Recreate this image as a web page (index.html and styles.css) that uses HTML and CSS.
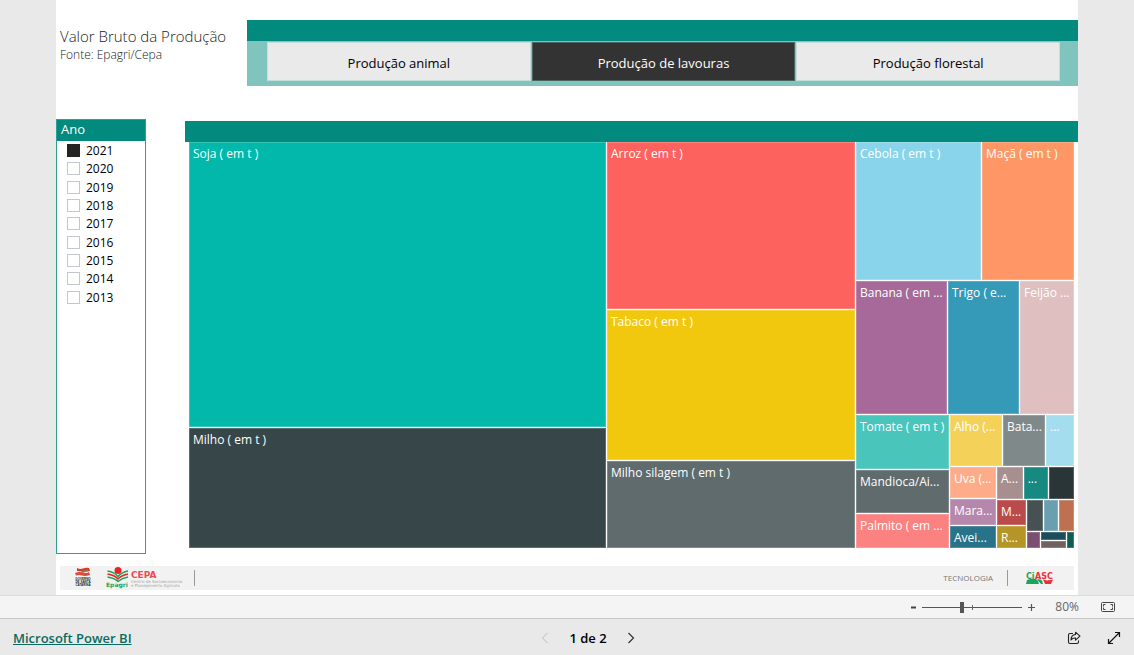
FILE: index.html
```html
<!DOCTYPE html>
<html lang="pt-BR">
<head>
<meta charset="utf-8">
<meta name="viewport" content="width=device-width, initial-scale=1">
<title>Valor Bruto da Produção</title>
<link rel="stylesheet" href="styles.css">
</head>
<body>
<main class="report">
  <header class="report-header">
    <div class="titles">
      <h1 class="title">Valor Bruto da Produção</h1>
      <p class="source">Fonte: Epagri/Cepa</p>
    </div>
    <div class="tabs-panel">
      <div class="band"></div>
      <nav class="tabs" aria-label="Produção">
        <button class="tab" type="button">Produção animal</button>
        <button class="tab tab-active" type="button">Produção de lavouras</button>
        <button class="tab" type="button">Produção florestal</button>
      </nav>
    </div>
  </header>

  <div class="visuals">
    <section class="slicer">
      <h2 class="slicer-title">Ano</h2>
      <div class="years">
        <label class="year"><input class="check" type="checkbox" checked>2021</label>
        <label class="year"><input class="check" type="checkbox">2020</label>
        <label class="year"><input class="check" type="checkbox">2019</label>
        <label class="year"><input class="check" type="checkbox">2018</label>
        <label class="year"><input class="check" type="checkbox">2017</label>
        <label class="year"><input class="check" type="checkbox">2016</label>
        <label class="year"><input class="check" type="checkbox">2015</label>
        <label class="year"><input class="check" type="checkbox">2014</label>
        <label class="year"><input class="check" type="checkbox">2013</label>
      </div>
    </section>

    <section class="chart">
      <div class="band"></div>
      <div class="treemap">
        <div class="col" style="flex-grow:417">
          <div class="tile soja" style="flex-grow:285">Soja ( em t )</div>
          <div class="tile milho" style="flex-grow:120">Milho ( em t )</div>
        </div>
        <div class="col" style="flex-grow:248">
          <div class="tile arroz" style="flex-grow:167">Arroz ( em t )</div>
          <div class="tile tabaco" style="flex-grow:150">Tabaco ( em t )</div>
          <div class="tile silagem" style="flex-grow:87">Milho silagem ( em t )</div>
        </div>
        <div class="col" style="flex-grow:218">
          <div class="row" style="flex-grow:138">
            <div class="tile cebola" style="flex-grow:125">Cebola ( em t )</div>
            <div class="tile maca" style="flex-grow:92">Maçã ( em t )</div>
          </div>
          <div class="row" style="flex-grow:133">
            <div class="tile banana" style="flex-grow:91">Banana ( em ...</div>
            <div class="tile trigo" style="flex-grow:71">Trigo ( e...</div>
            <div class="tile feijao" style="flex-grow:54">Feijão ...</div>
          </div>
          <div class="row" style="flex-grow:133">
            <div class="col" style="flex-grow:93">
              <div class="tile tomate" style="flex-grow:54">Tomate ( em t )</div>
              <div class="tile mandioca" style="flex-grow:43">Mandioca/Ai...</div>
              <div class="tile palmito" style="flex-grow:34">Palmito ( em ...</div>
            </div>
            <div class="col" style="flex-grow:124">
              <div class="row" style="flex-grow:51">
                <div class="tile alho" style="flex-grow:52">Alho (...</div>
                <div class="tile batata" style="flex-grow:42">Bata...</div>
                <div class="tile sky" style="flex-grow:28">...</div>
              </div>
              <div class="row" style="flex-grow:81">
                <div class="col" style="flex-grow:46">
                  <div class="tile uva" style="flex-grow:31">Uva (...</div>
                  <div class="tile maracuja" style="flex-grow:26">Mara...</div>
                  <div class="tile aveia" style="flex-grow:22">Avei...</div>
                </div>
                <div class="col" style="flex-grow:77">
                  <div class="row" style="flex-grow:32">
                    <div class="tile mauve" style="flex-grow:26">A...</div>
                    <div class="tile jade" style="flex-grow:25">...</div>
                    <div class="tile ink" style="flex-grow:25"></div>
                  </div>
                  <div class="row" style="flex-grow:48">
                    <div class="col" style="flex-grow:29">
                      <div class="tile brick" style="flex-grow:25">M...</div>
                      <div class="tile mustard" style="flex-grow:22">R...</div>
                    </div>
                    <div class="col" style="flex-grow:47">
                      <div class="row" style="flex-grow:31">
                        <div class="tile slate" style="flex-grow:16"></div>
                        <div class="tile steel" style="flex-grow:15"></div>
                        <div class="tile copper" style="flex-grow:15"></div>
                      </div>
                      <div class="row" style="flex-grow:16">
                        <div class="tile plum" style="flex-grow:13"></div>
                        <div class="col" style="flex-grow:25">
                          <div class="tile navy" style="flex-grow:7"></div>
                          <div class="tile taupe" style="flex-grow:7"></div>
                        </div>
                        <div class="tile forest" style="flex-grow:7"></div>
                      </div>
                    </div>
                  </div>
                </div>
              </div>
            </div>
          </div>
        </div>
      </div>
    </section>
  </div>

  <footer class="credits">
    <svg class="logo-gov" width="18" height="22" viewBox="0 0 18 22" role="img" aria-label="Governo de Santa Catarina">
      <path d="M3 1q3 1.500 6 .5t6-.5l1 3q-4 1-7 .5T3 4z" fill="#e0322f"/>
      <path d="M7 3.500q4 0 6-1.500l1.500 1.500L8 6z" fill="#7d8a35"/>
      <path d="M1 6q4-1.500 8-.5t6-.5l1 3q-5 1.500-8 .5T2 8.500z" fill="#e04a3c"/>
      <g font-family="Liberation Sans, sans-serif" font-weight="700" font-size="3" fill="#222" text-anchor="middle">
        <text x="9" y="12.500">GOVERNO</text><text x="9" y="15.500">DE SANTA</text><text x="9" y="18.500">CATARINA</text>
      </g>
    </svg>
    <svg class="logo-cepa" width="80" height="24" viewBox="0 0 80 24" role="img" aria-label="Epagri Cepa">
      <circle cx="12" cy="4.500" r="3.500" fill="#ed2027"/>
      <g fill="none" stroke-width="1.500">
        <path d="M1.500 5q7 1 10.500 5.500q4-4.500 10-5.500" stroke="#1ba45a"/>
        <path d="M1.500 8q7 1 10.500 5q4-4 10-5" stroke="#ed2027"/>
        <path d="M1.500 11q7 1 10.500 4.500q4-3.500 10-4.500" stroke="#1ba45a"/>
      </g>
      <text x="0" y="21" font-family="DejaVu Sans, sans-serif" font-weight="700" font-size="6" fill="#1ba45a">Epagri</text>
      <text x="25" y="11.500" font-family="DejaVu Sans, sans-serif" font-weight="700" font-size="9" fill="#f04850">CEPA</text>
      <g font-family="DejaVu Sans, sans-serif" font-size="4" fill="#a5a5a5">
        <text x="25" y="17">Centro de Socioeconomia</text><text x="25" y="20.500">e Planejamento Agrícola</text>
      </g>
    </svg>
    <span class="divider"></span>
    <span class="tech">TECNOLOGIA</span>
    <span class="divider"></span>
    <svg class="logo-ciasc" width="28" height="14" viewBox="0 0 28 14" role="img" aria-label="CIASC">
      <path d="M0 13l1-4q5-2 9-1l2 2 1 3z" fill="#1ba45a"/>
      <path d="M11 8.500q3-1 5 1l1 3.500h-2z" fill="#1ba45a"/>
      <path d="M17 8.500l4 1 6-1-2 4.500h-6z" fill="#ed2f36"/>
      <g font-family="DejaVu Sans, sans-serif" font-weight="700" font-size="8">
        <text x="0" y="7.500" fill="#1ba45a">Ci</text><text x="9" y="7.500" fill="#ed2f36">ASC</text>
      </g>
    </svg>
  </footer>
</main>

<div class="zoombar">
  <button class="zoom-btn" type="button" aria-label="Reduzir"><svg width="7" height="9" viewBox="0 0 7 9"><path d="M1 4.500h5" stroke="#444" stroke-width="2"/></svg></button>
  <input class="zoom-range" type="range" min="0" max="100" value="39" aria-label="Zoom">
  <button class="zoom-btn" type="button" aria-label="Ampliar"><svg width="9" height="9" viewBox="0 0 9 9"><path d="M1 4.500h7M4.500 1v7" stroke="#555" stroke-width="1.200"/></svg></button>
  <span class="percent">80%</span>
  <button class="zoom-btn fit" type="button" aria-label="Ajustar à página"><svg width="14" height="10" viewBox="0 0 14 10" fill="none" stroke="#444"><rect x=".5" y=".5" width="13" height="9" rx="1"/><path d="M4.500 2.500h-2v2M2.500 5.500v2h2M9.500 2.500h2v2M11.500 5.500v2h-2"/></svg></button>
</div>

<div class="navbar">
  <a class="brand" href="#">Microsoft Power BI</a>
  <div class="pager">
    <button class="icon-btn" type="button" disabled aria-label="Página anterior"><svg width="8" height="12" viewBox="0 0 8 12" fill="none" stroke="#bdbdbd"><path d="M6.500 1l-5 5 5 5"/></svg></button>
    <span class="page">1 de 2</span>
    <button class="icon-btn" type="button" aria-label="Próxima página"><svg width="8" height="12" viewBox="0 0 8 12" fill="none" stroke="#333" stroke-width="1.200"><path d="M1.500 1l5 5-5 5"/></svg></button>
  </div>
  <div class="actions">
    <button class="icon-btn" type="button" aria-label="Compartilhar"><svg width="14" height="14" viewBox="0 0 14 14" fill="none" stroke="#222" stroke-width="1.100" stroke-linejoin="round"><path d="M6 2.500H3q-1.500 0-1.500 1.500v7q0 1.500 1.500 1.500h7q1.500 0 1.500-1.500v-1.500"/><path d="M8.500 1.200l4.500 4-4.500 4V7Q5.500 6.700 4 9q0-5 4.500-5.500z"/></svg></button>
    <button class="icon-btn" type="button" aria-label="Tela inteira"><svg width="14" height="14" viewBox="0 0 14 14" fill="none" stroke="#111" stroke-width="1.200"><path d="M1.500 12.500l11-11M8 1.500h4.500V6M1.500 8v4.500H6"/></svg></button>
  </div>
</div>
</body>
</html>
```
FILE: styles.css
```css
* { box-sizing: border-box; }

body {
  margin: 0;
  min-height: 100vh;
  display: flex;
  flex-direction: column;
  background: #e9e9e9;
  color: #000;
  font: 13px/18px "Open Sans", "Noto Sans", sans-serif;
}

h1, h2, p { margin: 0; font-weight: 400; }
button { font: inherit; border: 0; background: none; padding: 0; }
svg { display: block; }

.report {
  flex: 1;
  display: flex;
  flex-direction: column;
  margin: 0 56px;
  padding-top: 20px;
  background: #fff;
}

.report-header { display: flex; }
.titles { width: 191px; padding: 6px 0 0 4px; color: #222; }
.title { font-size: 15px; font-weight: 300; line-height: 20px; white-space: nowrap; }
.source { font-size: 12px; font-weight: 300; line-height: 18px; }

.band { height: 21px; background: #028a7e; }
.tabs-panel { flex: 1; background: #80c4be; }
.tabs {
  display: flex;
  gap: 1px;
  padding: 1px 18px 5px 20px;
}
.tab {
  flex: 1;
  height: 39px;
  padding-top: 2px;
  border: 1px solid #c5deda;
  background: #eaeaea;
  color: #000;
}
.tab-active { background: #333; border-color: #4d6462; color: #fff; }

.visuals { flex: 1; display: flex; gap: 39px; padding-top: 33px; }

.slicer {
  width: 90px;
  margin-bottom: 12px;
  border: 1px solid #2f9f94;
}
.slicer-title {
  height: 21px;
  padding-left: 4px;
  background: #028a7e;
  color: #fff;
  font-size: 13px;
  line-height: 18px;
}
.years {
  height: 165px;
  display: grid;
  grid-template-rows: repeat(9, 1fr);
  margin-top: 1px;
  padding-left: 10px;
  font-size: 12px;
}
.year { display: flex; align-items: center; gap: 6px; }
.check {
  appearance: none;
  width: 13px;
  height: 13px;
  margin: 0 0 1px;
  border: 1px solid #c3c7ce;
  background: #fff;
}
.check:checked { background: #252423; border-color: #252423; }

.chart { flex: 1; display: flex; flex-direction: column; padding-top: 2px; }
.treemap {
  flex: 1;
  display: flex;
  gap: 1px;
  margin: 0 4px 18px;
}
.col, .row {
  display: flex;
  gap: 1px;
  flex-basis: 0;
  min-width: 0;
  min-height: 0;
}
.col { flex-direction: column; }
.tile {
  flex-basis: 0;
  min-width: 0;
  min-height: 0;
  overflow: hidden;
  color: #fff;
  font-size: 12px;
  line-height: 24px;
  text-indent: 4px;
  white-space: nowrap;
  box-shadow: inset 0 0 0 1px rgba(255, 255, 255, .2);
}

.soja { background: #01b8aa; }
.milho { background: #374649; }
.arroz { background: #fd625e; }
.tabaco { background: #f2c80f; }
.silagem { background: #5f6b6d; }
.cebola { background: #8ad4eb; }
.maca { background: #fe9666; }
.banana { background: #a66999; }
.trigo { background: #3599b8; }
.feijao { background: #dfbfbf; }
.tomate { background: #4ac5bb; }
.mandioca { background: #5f6b6d; }
.palmito { background: #fb8281; }
.alho { background: #f4d25a; }
.batata { background: #7f898a; }
.sky { background: #a4ddee; }
.uva { background: #fdab89; }
.maracuja { background: #b687ac; }
.aveia { background: #28738a; }
.mauve { background: #a78f8f; }
.jade { background: #168980; }
.ink { background: #293537; }
.brick { background: #bb4a4a; }
.mustard { background: #b59525; }
.slate { background: #475052; }
.steel { background: #6a9fb0; }
.copper { background: #bd7150; }
.plum { background: #7b4f71; }
.navy { background: #1b4d5c; }
.taupe { background: #706060; }
.forest { background: #0f5c55; }

.credits {
  height: 24px;
  display: flex;
  align-items: center;
  margin: 0 4px 5px;
  padding: 0 20px 0 14px;
  background: #f2f2f2;
}
.logo-cepa { margin: 0 8px 0 14px; }
.divider { width: 1px; height: 16px; background: #999; }
.tech { margin: 0 14px 0 auto; color: #777; font-size: 8px; }
.logo-ciasc { margin-left: 18px; }

.zoombar {
  height: 24px;
  display: flex;
  align-items: center;
  justify-content: flex-end;
  gap: 5px;
  padding-right: 19px;
  border-top: 1px solid #dcdcdc;
  border-bottom: 1px solid #c8c8c8;
  background: #f4f4f4;
}
.zoom-range {
  appearance: none;
  width: 100px;
  height: 12px;
  margin: 0;
  background:
    linear-gradient(#666, #666) 50px 50% / 1px 5px no-repeat,
    linear-gradient(#555, #555) 0 50% / 100% 1px no-repeat;
}
.zoom-range::-webkit-slider-thumb {
  appearance: none;
  width: 4px;
  height: 11px;
  background: #555;
}
.percent { margin-left: 14px; color: #666; font-size: 12px; }
.fit { margin-left: 17px; }

.navbar {
  height: 36px;
  display: grid;
  grid-template-columns: 1fr auto 1fr;
  align-items: center;
  padding: 2px 13px 0;
}
.brand { color: #0b6a60; font-size: 13px; font-weight: 600; }
.pager { display: flex; align-items: center; gap: 20px; padding-left: 42px; }
.page { font-size: 13px; font-weight: 600; }
.actions { display: flex; justify-content: flex-end; gap: 26px; }
```
